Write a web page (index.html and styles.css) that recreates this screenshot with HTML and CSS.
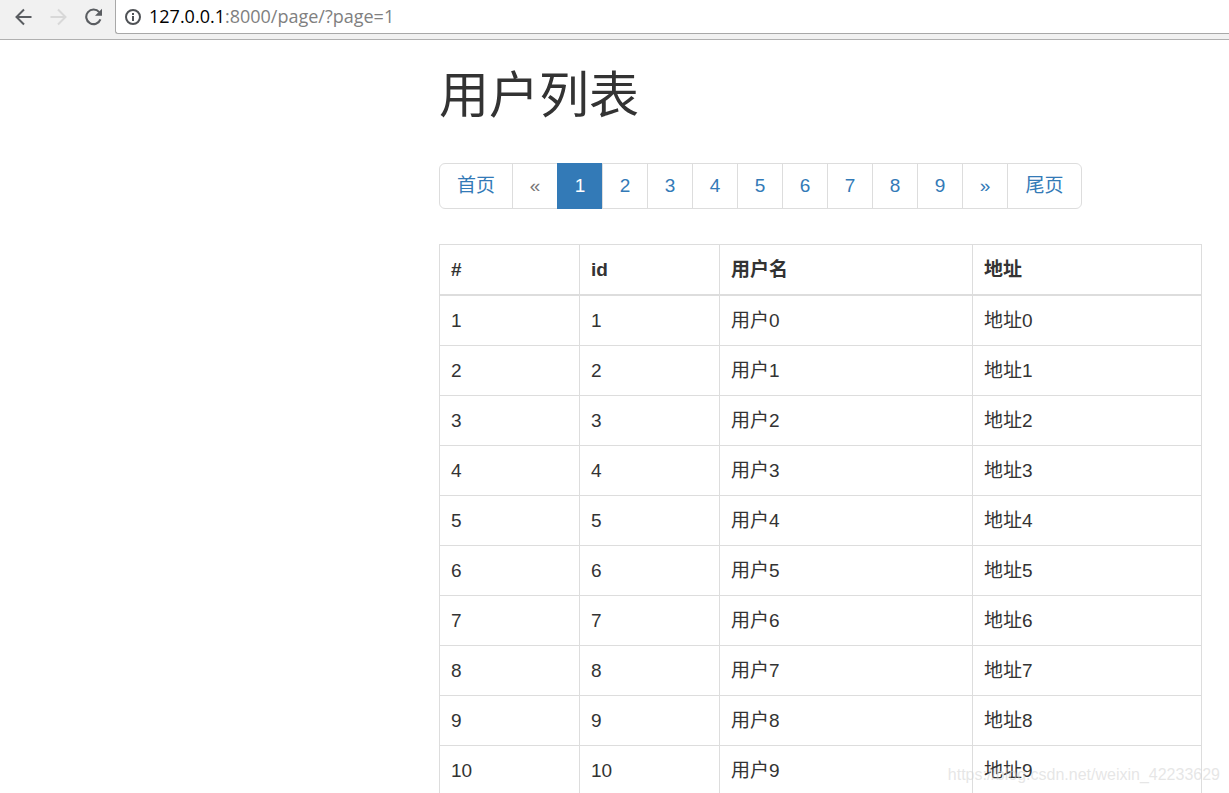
FILE: index.html
```html
<!DOCTYPE html>
<html lang="zh-CN">
<head>
<meta charset="utf-8">
<title>用户列表</title>
<link rel="stylesheet" href="styles.css">
</head>
<body>
<header class="toolbar">
  <button class="tool" type="button" aria-label="后退">
    <svg width="18" height="18" viewBox="0 0 18 18" fill="none" stroke="#5a5d61" stroke-width="2"><path d="M16.500 9H2M9 1.500L1.500 9L9 16.500"/></svg>
  </button>
  <button class="tool" type="button" aria-label="前进" disabled>
    <svg width="18" height="18" viewBox="0 0 18 18" fill="none" stroke="#d8d8d8" stroke-width="2"><path d="M.500 9H15M8 1.500L15.500 9L8 16.500"/></svg>
  </button>
  <button class="tool" type="button" aria-label="刷新">
    <svg width="18" height="18" viewBox="0 0 18 18"><path d="M14.200 4.200A7.300 7.300 0 1 0 15.400 11.300" fill="none" stroke="#5a5d61" stroke-width="2.100"/><path d="M17 .800V7.800H10Z" fill="#5a5d61"/></svg>
  </button>
  <div class="address">
    <svg width="16" height="16" viewBox="0 0 16 16" fill="none" stroke="#4f5256" stroke-width="2"><circle cx="8" cy="8" r="7"/><path d="M8 7v5M8 4v2"/></svg>
    <div class="url" role="textbox" aria-label="地址栏" contenteditable="true" spellcheck="false"><span class="host">127.0.0.1</span>:8000/page/?page=1</div>
  </div>
</header>
<main class="content">
  <h1 class="title">用户列表</h1>
  <nav aria-label="分页">
    <ul class="pagination">
      <li><a href="#">首页</a></li>
      <li class="disabled"><a>«</a></li>
      <li class="active"><a href="#" aria-current="page">1</a></li>
      <li><a href="#">2</a></li>
      <li><a href="#">3</a></li>
      <li><a href="#">4</a></li>
      <li><a href="#">5</a></li>
      <li><a href="#">6</a></li>
      <li><a href="#">7</a></li>
      <li><a href="#">8</a></li>
      <li><a href="#">9</a></li>
      <li><a href="#">»</a></li>
      <li><a href="#">尾页</a></li>
    </ul>
  </nav>
  <table class="users">
    <colgroup><col class="col-num"><col class="col-id"><col class="col-name"><col></colgroup>
    <thead><tr><th>#</th><th>id</th><th>用户名</th><th>地址</th></tr></thead>
    <tbody>
      <tr><td>1</td><td>1</td><td>用户0</td><td>地址0</td></tr>
      <tr><td>2</td><td>2</td><td>用户1</td><td>地址1</td></tr>
      <tr><td>3</td><td>3</td><td>用户2</td><td>地址2</td></tr>
      <tr><td>4</td><td>4</td><td>用户3</td><td>地址3</td></tr>
      <tr><td>5</td><td>5</td><td>用户4</td><td>地址4</td></tr>
      <tr><td>6</td><td>6</td><td>用户5</td><td>地址5</td></tr>
      <tr><td>7</td><td>7</td><td>用户6</td><td>地址6</td></tr>
      <tr><td>8</td><td>8</td><td>用户7</td><td>地址7</td></tr>
      <tr><td>9</td><td>9</td><td>用户8</td><td>地址8</td></tr>
      <tr><td>10</td><td>10</td><td>用户9</td><td>地址9</td></tr>
    </tbody>
  </table>
</main>
<div class="watermark">https://blog.csdn.net/weixin_42233629</div>
</body>
</html>
```

FILE: styles.css
```css
* { box-sizing: border-box; }

body {
  margin: 0;
  height: 100vh;
  overflow: hidden;
  background: #fff;
  color: #333;
  font: 19px/27px "Liberation Sans", "Noto Sans CJK SC", sans-serif;
}

.toolbar {
  display: flex;
  align-items: flex-start;
  height: 40px;
  padding-left: 6px;
  background: #f1f1f1;
  border-bottom: 1px solid #b0b0b0;
}

.tool {
  display: grid;
  place-items: center;
  width: 35px;
  height: 34px;
  padding: 0;
  border: 0;
  background: none;
}

.address {
  flex: 1;
  display: flex;
  align-items: center;
  gap: 8px;
  height: 34px;
  margin-left: 4px;
  padding-left: 9px;
  background: #fff;
  border: 1px solid #a8a8a8;
  border-width: 0 0 1px 1px;
  border-radius: 0 0 0 3px;
}

.url {
  flex: 1;
  padding-bottom: 2px;
  color: #808080;
  font: 18px/30px "Open Sans", "Noto Sans", sans-serif;
  outline: 0;
}

.host { color: #000; }

.content { padding: 29px 27px 0 439px; }

.title {
  margin: 0 0 39px;
  font-size: 50px;
  font-weight: 400;
  line-height: 55px;
}

.pagination {
  display: flex;
  margin: 0 0 35px;
  padding: 0;
  list-style: none;
}

.pagination li { width: 45px; }

.pagination a {
  display: block;
  margin-left: -1px;
  padding: 8px 0 9px;
  border: 1px solid #ddd;
  background: #fff;
  color: #337ab7;
  text-align: center;
  text-decoration: none;
}

.pagination li:first-child, .pagination li:last-child { width: 74px; }
.pagination li:first-child a { margin-left: 0; border-radius: 6px 0 0 6px; }
.pagination li:last-child a { border-radius: 0 6px 6px 0; }
.pagination .disabled a { color: #777; }

.pagination .active a {
  border-color: #337ab7;
  background: #337ab7;
  color: #fff;
}

.users {
  width: 100%;
  table-layout: fixed;
  border-collapse: collapse;
}

.col-num, .col-id { width: 140px; }
.col-name { width: 253px; }

.users th, .users td {
  padding: 11px;
  border: 1px solid #ddd;
  text-align: left;
}

.users th { border-bottom-width: 2px; }

.watermark {
  position: absolute;
  right: 9px;
  bottom: 8px;
  color: rgba(205, 205, 205, 0.5);
  font-size: 16px;
  line-height: 20px;
}
```
